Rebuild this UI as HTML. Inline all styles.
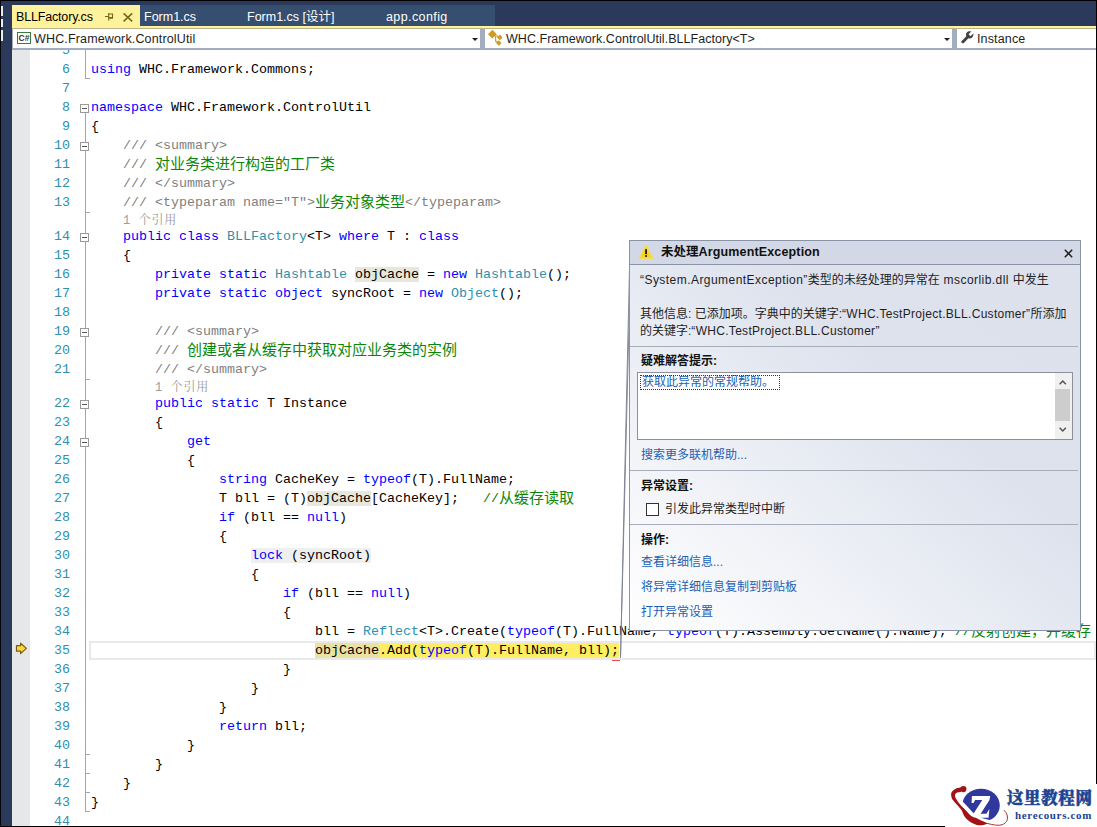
<!DOCTYPE html>
<html lang="zh-CN">
<head>
<meta charset="utf-8">
<title>BLLFactory.cs</title>
<style>
*{box-sizing:border-box;margin:0;padding:0}
html,body{width:1097px;height:827px;overflow:hidden;background:#fff}
body{position:relative;font-family:"Liberation Sans","Noto Sans CJK SC",sans-serif;font-size:12px;color:#1e1e1e}
#frame{position:absolute;left:0;top:0;width:1097px;height:827px;overflow:hidden;background:#fff}
/* chrome */
#topbar{position:absolute;left:0;top:0;width:1097px;height:28px;background:#2b3a5a}
#blacktop{position:absolute;left:0;top:0;width:1097px;height:1px;background:#000}
#leftbar{position:absolute;left:0;top:0;width:12px;height:827px;background:#2b3a5a}
#blackleft{position:absolute;left:0;top:0;width:1px;height:827px;background:#05070c}
#blackright{position:absolute;left:1096px;top:0;width:1px;height:784px;background:#000}
#blackbottom{position:absolute;left:0;top:826px;width:950px;height:1px;background:#000}
.tab{position:absolute;top:5px;height:21px;line-height:21px;font-size:12.5px;white-space:nowrap}
#tabA{left:12px;width:128px;height:23px;background:#fff29d;color:#000}
.ic{position:absolute;overflow:visible}
.frag{position:absolute;left:1px;width:2px;background:#e8ecf4}
#tabA span.tt{position:absolute;left:4px;top:2px;letter-spacing:-0.17px}
#tabrest{left:140px;width:355px;background:#364e6f;color:#fff}
#tabrest span{position:absolute;top:2px}
#yline{position:absolute;left:12px;top:26px;width:1085px;height:2px;background:#fff29d}
#nav{position:absolute;left:12px;top:28px;width:1085px;height:22px;background:#a3adc1;border-top:1px solid #b9b48a}
.combo{position:absolute;top:0;height:19px;background:#fff;line-height:19px;font-size:12.5px;letter-spacing:0.15px;white-space:nowrap;color:#1e1e1e}
.cs{position:absolute;left:4px;top:3px;width:14px;height:12px;border:1px solid #3a7d3a;font-size:8.5px;line-height:10px;font-weight:bold;text-align:center;letter-spacing:0;color:#333}
.combo .tx{position:absolute;top:1px}
.arrow{position:absolute;top:9px;width:0;height:0;border-left:3px solid transparent;border-right:3px solid transparent;border-top:3.5px solid #1e1e1e}
/* editor */
#gutter{position:absolute;left:12px;top:50px;width:18px;height:777px;background:#e6e7e8}
#editor{position:absolute;left:0;top:50px;width:1097px;height:777px;overflow:hidden}
#ed{position:absolute;left:0;top:-50px;width:1097px;height:827px;font-family:"Liberation Mono","Noto Sans CJK SC",monospace;font-size:13.333px;color:#000}
.ln{position:absolute;left:91px;height:19px;line-height:19px;white-space:pre}
.num{position:absolute;left:30px;width:40px;height:19px;line-height:19px;text-align:right;color:#2b91af;white-space:pre}
.k{color:#0000ff}.t{color:#2b91af}.c{color:#008000}.x{color:#808080}
.z{color:#0a870a;font-family:"Noto Sans CJK SC",sans-serif;font-size:15px;line-height:0;position:relative;top:1px}
.clr{height:15px;line-height:15px}
.cl{color:#9a9a9a;font-size:12px;line-height:0;letter-spacing:0.7px;font-family:"Liberation Mono","Noto Serif CJK SC",serif;position:relative;top:1px}
.hl{background:#e7e8dd}
.hl2{background:#e9e2a3}
.lk{background:#efefef}
.cur{background:#ffee62}
.ob{position:absolute;left:80px;width:9px;height:9px;border:1px solid #999;background:#fff}
.ob i{position:absolute;left:1px;top:3px;width:5px;height:1px;background:#555}
.vl{position:absolute;left:85px;width:1px;background:#a5a5a5}
.tk{position:absolute;left:85px;width:5px;height:1px;background:#a5a5a5}
#curbox{position:absolute;left:89px;width:1007px;height:19px;border:2px solid #e9e9e9;margin-top:-0.5px}
/* dialog */
#dlg{position:absolute;left:629px;top:240px;width:452px;height:391px;border:1px solid #8a93a5;background:linear-gradient(to bottom left,#dce1ec 0%,#dde2ed 38%,#fdfdfe 96%);font-size:12px;color:#1e1e1e}
#dlgh{position:absolute;left:0;top:0;width:450px;height:24px;background:#d2d8e5;border-bottom:1px solid #8a93a5}
#dlg .p{position:absolute;white-space:nowrap;line-height:17px;height:17px}
#dlg .b{font-weight:bold;color:#111}
#dlg .a{color:#1a62b5}
#dlg .sep{position:absolute;left:0;width:448px;height:1px;background:#a7adba}
#lb{position:absolute;left:7px;top:131px;width:436px;height:68px;background:#fff;border:1px solid #8b909b}
.la{letter-spacing:0.45px}
.la2{letter-spacing:0.3px}
.lb2{letter-spacing:0.15px}
#foc{position:absolute;left:2px;top:2px;width:140px;height:15px;border:1px dotted #333}
#sb{position:absolute;right:0;top:0;width:17px;height:66px;background:#f0f0f0}
#th{position:absolute;left:0;top:16px;width:15px;height:32px;background:#cdcdcd}
#cb{position:absolute;left:16px;top:261.5px;width:13px;height:13px;border:1px solid #333;background:#fff}
#wm{position:absolute;left:945px;top:784px;width:152px;height:43px;background:#fff}
#wm1{position:absolute;left:62px;top:3px;height:24px;line-height:24px;font-family:"Liberation Serif","Noto Serif CJK SC",serif;font-weight:900;font-size:16.5px;letter-spacing:0.6px;-webkit-text-stroke:0.5px #1c4492;color:#1c4492;white-space:nowrap}
#wm2{position:absolute;left:70px;top:24px;height:14px;line-height:14px;font-family:"Liberation Serif",serif;font-weight:bold;font-size:11px;letter-spacing:0.65px;color:#1c4492;white-space:nowrap}
</style>
</head>
<body>
<div id="frame">

<div id="gutter"></div>
<div id="editor"><div id="ed">
<div class="vl" style="top:50px;height:28px"></div>
<div class="vl" style="top:113px;height:699px"></div>
<svg class="ic" style="left:15px;top:642px" width="13" height="13" viewBox="0 0 13 13"><path d="M1.5 3.6H5.6V1.2L11.4 6.4L5.6 11.6V9.2H1.5Z" fill="#f6da38" stroke="#7a5c1e" stroke-width="1.2" stroke-linejoin="round"/></svg>
<div style="position:absolute;left:612px;top:659px;width:8px;height:2px;background:#e8484a"></div>
<div id="curbox" style="top:641px"></div>
<div class="num" style="top:41px">5</div>
<div class="num" style="top:60px">6</div>
<div class="ln" style="top:60px"><span class="k">using</span> WHC.Framework.Commons;</div>
<div class="num" style="top:79px">7</div>
<div class="num" style="top:98px">8</div>
<div class="ln" style="top:98px"><span class="k">namespace</span> WHC.Framework.ControlUtil</div>
<div class="num" style="top:117px">9</div>
<div class="ln" style="top:117px">{</div>
<div class="num" style="top:136px">10</div>
<div class="ln" style="top:136px">    <span class="x">/// &lt;summary&gt;</span></div>
<div class="num" style="top:155px">11</div>
<div class="ln" style="top:155px">    <span class="x">/// </span><span class="z">对业务类进行构造的工厂类</span></div>
<div class="num" style="top:174px">12</div>
<div class="ln" style="top:174px">    <span class="x">/// &lt;/summary&gt;</span></div>
<div class="num" style="top:193px">13</div>
<div class="ln" style="top:193px">    <span class="x">/// &lt;typeparam name="T"&gt;</span><span class="z">业务对象类型</span><span class="x">&lt;/typeparam&gt;</span></div>
<div class="ln clr" style="top:212px">    <span class="cl">1 个引用</span></div>
<div class="num" style="top:227px">14</div>
<div class="ln" style="top:227px">    <span class="k">public class</span> <span class="t">BLLFactory</span>&lt;T&gt; <span class="k">where</span> T : <span class="k">class</span></div>
<div class="num" style="top:246px">15</div>
<div class="ln" style="top:246px">    {</div>
<div class="num" style="top:265px">16</div>
<div class="ln" style="top:265px">        <span class="k">private static</span> <span class="t">Hashtable</span> <span class="hl">objCache</span> = <span class="k">new</span> <span class="t">Hashtable</span>();</div>
<div class="num" style="top:284px">17</div>
<div class="ln" style="top:284px">        <span class="k">private static object</span> syncRoot = <span class="k">new</span> <span class="t">Object</span>();</div>
<div class="num" style="top:303px">18</div>
<div class="num" style="top:322px">19</div>
<div class="ln" style="top:322px">        <span class="x">/// &lt;summary&gt;</span></div>
<div class="num" style="top:341px">20</div>
<div class="ln" style="top:341px">        <span class="x">/// </span><span class="z">创建或者从缓存中获取对应业务类的实例</span></div>
<div class="num" style="top:360px">21</div>
<div class="ln" style="top:360px">        <span class="x">/// &lt;/summary&gt;</span></div>
<div class="ln clr" style="top:379px">        <span class="cl">1 个引用</span></div>
<div class="num" style="top:394px">22</div>
<div class="ln" style="top:394px">        <span class="k">public static</span> T Instance</div>
<div class="num" style="top:413px">23</div>
<div class="ln" style="top:413px">        {</div>
<div class="num" style="top:432px">24</div>
<div class="ln" style="top:432px">            <span class="k">get</span></div>
<div class="num" style="top:451px">25</div>
<div class="ln" style="top:451px">            {</div>
<div class="num" style="top:470px">26</div>
<div class="ln" style="top:470px">                <span class="k">string</span> CacheKey = <span class="k">typeof</span>(T).FullName;</div>
<div class="num" style="top:489px">27</div>
<div class="ln" style="top:489px">                T bll = (T)<span class="hl">objCache</span>[CacheKey];   <span class="c">//</span><span class="z">从缓存读取</span></div>
<div class="num" style="top:508px">28</div>
<div class="ln" style="top:508px">                <span class="k">if</span> (bll == <span class="k">null</span>)</div>
<div class="num" style="top:527px">29</div>
<div class="ln" style="top:527px">                {</div>
<div class="num" style="top:546px">30</div>
<div class="ln" style="top:546px">                    <span class="lk"><span class="k">lock</span> (syncRoot)</span></div>
<div class="num" style="top:565px">31</div>
<div class="ln" style="top:565px">                    {</div>
<div class="num" style="top:584px">32</div>
<div class="ln" style="top:584px">                        <span class="k">if</span> (bll == <span class="k">null</span>)</div>
<div class="num" style="top:603px">33</div>
<div class="ln" style="top:603px">                        {</div>
<div class="num" style="top:622px">34</div>
<div class="ln" style="top:622px">                            bll = <span class="t">Reflect</span>&lt;T&gt;.Create(<span class="k">typeof</span>(T).FullName, <span class="k">typeof</span>(T).Assembly.GetName().Name); <span class="c">//</span><span class="z">反射创建，并缓存</span></div>
<div class="num" style="top:641px">35</div>
<div class="ln" style="top:641px">                            <span class="cur"><span class="hl2">objCache</span>.Add(<span class="k">typeof</span>(T).FullName, bll);</span></div>
<div class="num" style="top:660px">36</div>
<div class="ln" style="top:660px">                        }</div>
<div class="num" style="top:679px">37</div>
<div class="ln" style="top:679px">                    }</div>
<div class="num" style="top:698px">38</div>
<div class="ln" style="top:698px">                }</div>
<div class="num" style="top:717px">39</div>
<div class="ln" style="top:717px">                <span class="k">return</span> bll;</div>
<div class="num" style="top:736px">40</div>
<div class="ln" style="top:736px">            }</div>
<div class="num" style="top:755px">41</div>
<div class="ln" style="top:755px">        }</div>
<div class="num" style="top:774px">42</div>
<div class="ln" style="top:774px">    }</div>
<div class="num" style="top:793px">43</div>
<div class="ln" style="top:793px">}</div>
<div class="num" style="top:812px">44</div>
<div class="tk" style="top:78px"></div><div class="tk" style="top:212px"></div><div class="tk" style="top:379px"></div><div class="tk" style="top:754px"></div><div class="tk" style="top:773px"></div><div class="tk" style="top:792px"></div><div class="tk" style="top:811px"></div>
<div class="ob" style="top:104px"><i></i></div><div class="ob" style="top:142px"><i></i></div><div class="ob" style="top:233px"><i></i></div><div class="ob" style="top:328px"><i></i></div><div class="ob" style="top:400px"><i></i></div><div class="ob" style="top:438px"><i></i></div>
</div></div>

<div id="topbar"></div>
<div id="leftbar"></div>
<div id="blacktop"></div>
<div id="blackleft"></div>
<div class="frag" style="top:6px;height:10px"></div>
<div class="frag" style="top:19px;height:8px"></div>
<div class="frag" style="top:30px;height:11px"></div>
<div class="tab" id="tabA"><span class="tt">BLLFactory.cs</span>
<svg class="ic" style="left:93px;top:8px" width="9" height="8" viewBox="0 0 9 8"><path d="M0 3.5H4M3.7 0V7.5M4 1H7.5V4.5H4M4 5.2H8" fill="none" stroke="#75661a" stroke-width="1.1"/></svg>
<svg class="ic" style="left:111px;top:8px" width="10" height="9" viewBox="0 0 10 9"><path d="M0.6 0.4L9.2 8.4M9.2 0.4L0.6 8.4" fill="none" stroke="#75661a" stroke-width="1.5"/></svg>
</div>
<div class="tab" id="tabrest"><span style="left:4px">Form1.cs</span><span style="left:107px">Form1.cs [设计]</span><span style="left:246px;letter-spacing:0.4px">app.config</span></div>
<div id="yline"></div>
<div id="nav">
  <div class="combo" style="left:1px;width:467px"><div class="cs">C#</div><span class="tx" style="left:21px">WHC.Framework.ControlUtil</span><div class="arrow" style="left:459px"></div></div>
  <div class="combo" style="left:473px;width:467px">
  <svg class="ic" style="left:0px;top:0px" width="18" height="18" viewBox="0 0 18 18"><g fill="#d19a22"><path d="M7.4 0.8L11.8 5.2L7.4 9.6L3 5.2Z"/><path d="M14.8 5.6L17.6 8.4L14.8 11.2L12 8.4Z"/><path d="M13.8 11.2L16.6 14L13.8 16.8L11 14Z"/></g><path d="M10.5 7H13M10.7 7V12.7H12.5" fill="none" stroke="#c08a18" stroke-width="1"/></svg>
  <span class="tx" style="left:21px;letter-spacing:0.04px">WHC.Framework.ControlUtil.BLLFactory&lt;T&gt;</span><div class="arrow" style="left:459px"></div></div>
  <div class="combo" style="left:945px;width:140px">
  <svg class="ic" style="left:4px;top:2px" width="13" height="13" viewBox="0 0 13 13"><path d="M12.2 2.6 L9.6 5.2 L7.6 3.2 L10.2 0.6 C8.6 0 6.8 0.3 5.8 1.6 C4.9 2.7 4.8 4.1 5.3 5.3 L0.7 10 C0.2 10.6 0.3 11.5 0.9 12 C1.5 12.5 2.3 12.4 2.8 11.9 L7.4 7.3 C8.7 7.8 10.2 7.5 11.2 6.5 C12.3 5.4 12.6 3.9 12.2 2.6Z" fill="#424242"/></svg>
  <span class="tx" style="left:20px">Instance</span></div>
</div>

<svg id="callout" width="20" height="400" viewBox="0 0 20 400" style="position:absolute;left:614px;top:262px;overflow:visible"><path d="M15.5 6 L6.5 396 L15.5 44 Z" fill="#eef0f5" stroke="#7a8090" stroke-width="0.9"/></svg>
<div id="dlg">
  <div id="dlgh">
    <svg class="ic" style="left:8px;top:3px" width="16" height="16" viewBox="0 0 16 16"><path d="M8 1.2 L14.6 14.2 H1.4 Z" fill="#f7d21e" stroke="#f3da63" stroke-width="1.6" stroke-linejoin="round"/><rect x="7.2" y="5.2" width="1.7" height="5" fill="#111"/><rect x="7.2" y="11.2" width="1.7" height="1.7" fill="#111"/></svg>
    <span class="p b" style="left:31px;top:3px;font-size:12.5px">未处理<span class="lb2">ArgumentException</span></span>
    <svg class="ic" style="left:434px;top:8px" width="9" height="9" viewBox="0 0 9 9"><path d="M0.8 0.8L8.2 8.2M8.2 0.8L0.8 8.2" fill="none" stroke="#1e1e1e" stroke-width="1.5"/></svg>
  </div>
  <div class="p" style="left:10px;top:31px"><span class="la">“System.ArgumentException”</span>类型的未经处理的异常在<span class="la"> mscorlib.dll </span>中发生</div>
  <div class="p" style="left:10px;top:65px">其他信息: 已添加项。字典中的关键字:<span class="la2">“WHC.TestProject.BLL.Customer”</span>所添加</div>
  <div class="p" style="left:10px;top:82px">的关键字:<span class="la2">“WHC.TestProject.BLL.Customer”</span></div>
  <div class="sep" style="top:105px"></div>
  <div class="p b" style="left:11px;top:112px">疑难解答提示:</div>
  <div id="lb"><span class="p a" style="left:4px;top:1px">获取此异常的常规帮助。</span><div id="foc"></div>
    <div id="sb"><div id="th"></div>
      <svg class="ic" style="left:4px;top:7px" width="7.5" height="5" viewBox="0 0 9 6"><path d="M0.8 5L4.5 1.3L8.2 5" fill="none" stroke="#505050" stroke-width="1.7"/></svg>
      <svg class="ic" style="left:4px;top:54px" width="7.5" height="5" viewBox="0 0 9 6"><path d="M0.8 1L4.5 4.7L8.2 1" fill="none" stroke="#505050" stroke-width="1.7"/></svg>
    </div>
  </div>
  <div class="p a" style="left:11px;top:206px">搜索更多联机帮助...</div>
  <div class="sep" style="top:229px"></div>
  <div class="p b" style="left:11px;top:237px">异常设置:</div>
  <div id="cb"></div>
  <div class="p" style="left:35px;top:260px">引发此异常类型时中断</div>
  <div class="sep" style="top:283px"></div>
  <div class="p b" style="left:11px;top:291px">操作:</div>
  <div class="p a" style="left:11px;top:313px">查看详细信息...</div>
  <div class="p a" style="left:11px;top:338px">将异常详细信息复制到剪贴板</div>
  <div class="p a" style="left:11px;top:363px">打开异常设置</div>
</div>

<div id="blackright"></div>
<div id="blackbottom"></div>
<div id="wm">
<svg class="ic" style="left:0;top:-2px" width="70" height="45" viewBox="0 0 70 45">
<ellipse cx="36" cy="23.4" rx="18.8" ry="16.7" fill="#30389f"/>
<path d="M11.56 12.58 C11.93 13.49 12.48 16.14 13.75 18.05 C15.03 19.97 16.85 21.52 19.22 24.07 C21.59 26.62 24.88 30.95 27.98 33.37 C31.08 35.79 34.54 37.34 37.82 38.57 C41.11 39.80 46.03 40.39 47.67 40.75" fill="none" stroke="#fff" stroke-width="4.2"/>
<polygon points="26.88,13.95 45.21,13.95 44.50,18.05 35.63,31.73 41.38,31.73 44.39,27.08 43.57,35.83 26.06,35.83 29.07,30.63 37.28,18.05 30.16,18.05 28.52,21.06 26.61,21.06" fill="#fff"/>
<path d="M16.76 5.20 C15.80 5.42 12.66 5.79 11.02 6.56 C9.38 7.34 7.72 8.66 6.91 9.85 C6.11 11.03 5.98 12.22 6.20 13.68 C6.43 15.13 6.66 16.32 8.28 18.60 C9.91 20.88 14.12 24.80 15.94 27.35 C17.76 29.91 17.76 31.91 19.22 33.92 C20.68 35.92 22.32 37.84 24.69 39.39 C27.06 40.94 30.35 42.83 33.45 43.22 C36.55 43.60 41.65 41.94 43.29 41.68 L43.29 41.68 C42.02 41.12 37.73 39.27 35.63 38.29 C33.54 37.32 32.35 36.61 30.71 35.83 C29.07 35.06 27.43 34.87 25.79 33.64 C24.15 32.41 22.51 30.13 20.86 28.45 C19.22 26.76 17.49 25.35 15.94 23.52 C14.39 21.70 12.55 19.15 11.56 17.51 C10.58 15.86 10.08 14.77 10.03 13.68 C9.99 12.58 10.31 11.53 11.29 10.94 C12.28 10.35 15.17 10.26 15.94 10.12 Z" fill="#a31217"/>
<circle cx="18.4" cy="7.1" r="3.1" fill="#a31217"/>
<path d="M42.75 41.58 C44.20 41.85 49.04 43.05 51.50 43.22 C53.96 43.38 55.83 43.20 57.52 42.56 C59.20 41.92 60.80 40.65 61.62 39.39 C62.44 38.13 62.49 36.38 62.44 35.01 C62.39 33.64 61.94 32.35 61.35 31.18 C60.75 30.01 59.29 28.54 58.88 28.01" fill="none" stroke="#9c1a1e" stroke-width="0.9"/>
</svg>
<div id="wm1">这里教程网</div>
<div id="wm2">herecours.com</div>
</div>
</div>
</body>
</html>
